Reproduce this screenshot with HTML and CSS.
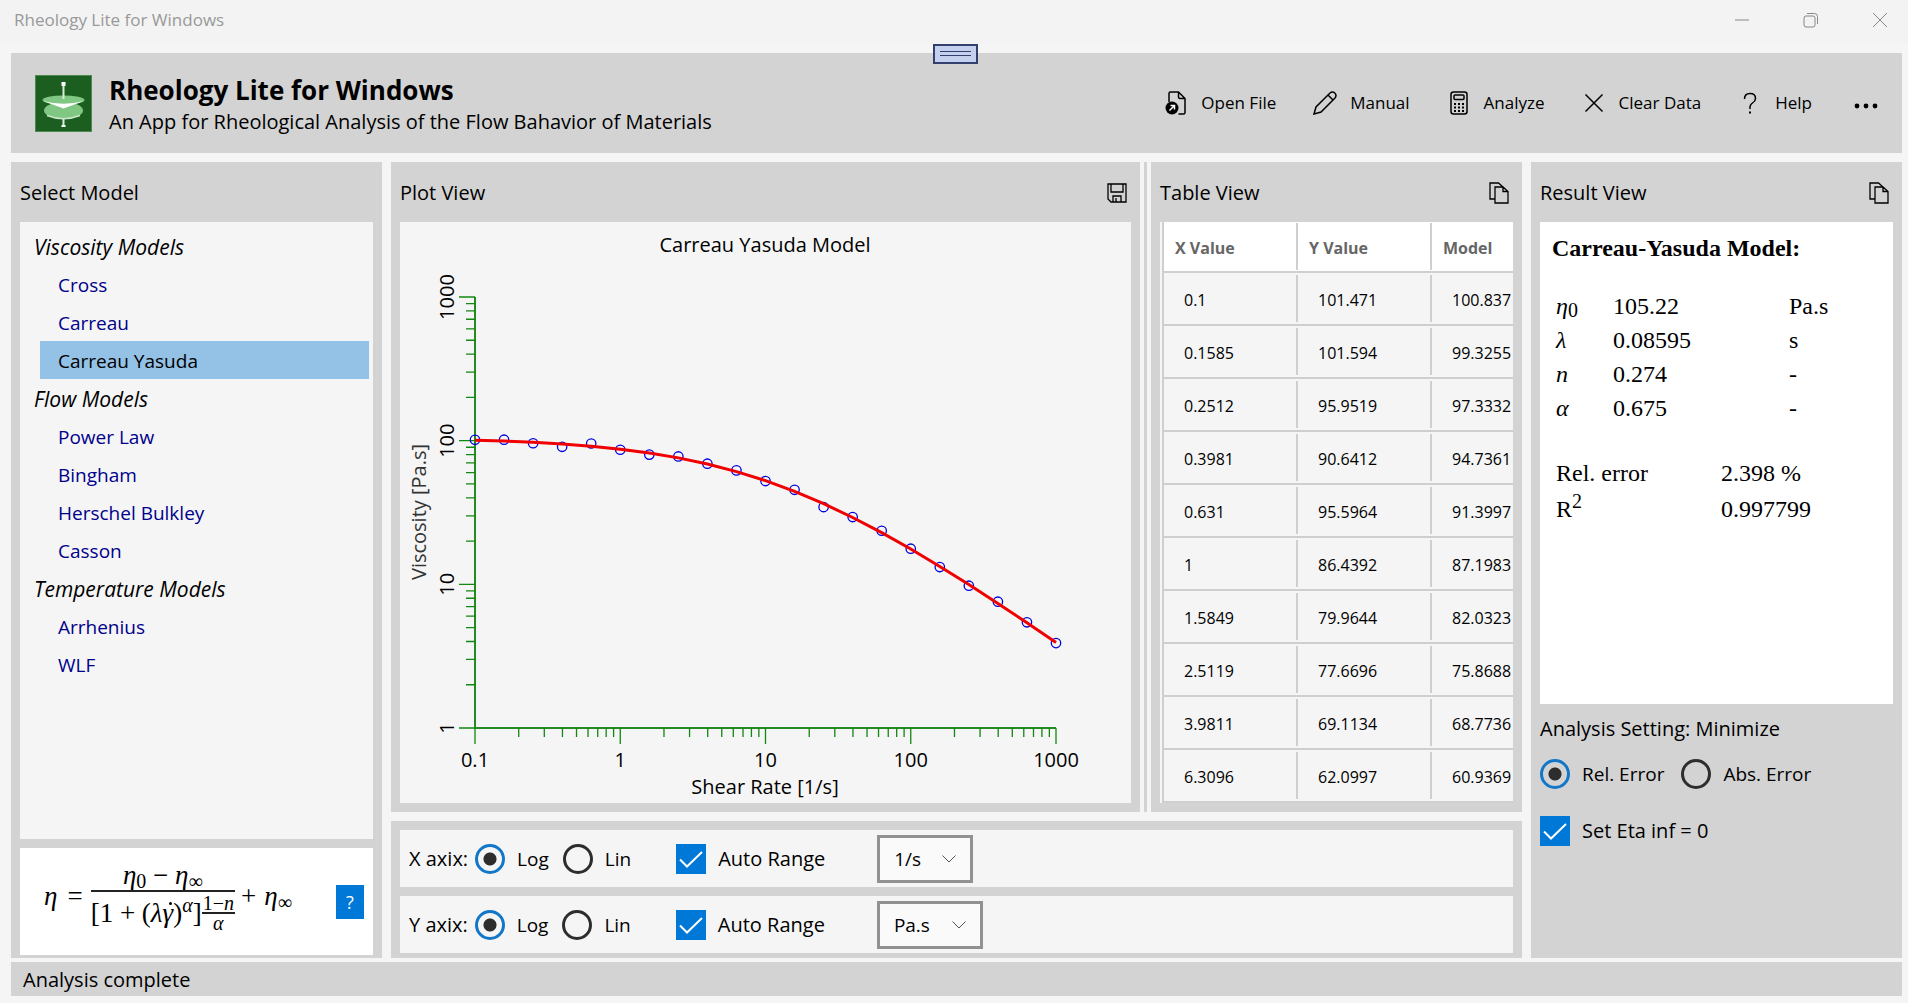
FILE: index.html
```html
<!DOCTYPE html>
<html lang="en">
<head>
  <meta charset="UTF-8">
  <meta name="viewport" content="width=device-width, initial-scale=1.0">
  <title>Rheology Lite for Windows</title>
  <link rel="stylesheet" href="styles.css">
</head>
<body>
  <div class="titlebar">
    <span>Rheology Lite for Windows</span>
    <div class="window-buttons">
      <button type="button" aria-label="Minimize">
        <svg width="16" height="16" viewBox="0 0 16 16"><path d="M1 8h14"/></svg>
      </button>
      <button type="button" aria-label="Restore">
        <svg width="16" height="16" viewBox="0 0 16 16"><rect x="1" y="4" width="11" height="11" rx="2"/><path d="M4 1.5h7.5a3 3 0 0 1 3 3V12"/></svg>
      </button>
      <button type="button" aria-label="Close">
        <svg width="16" height="16" viewBox="0 0 16 16"><path d="M1 1l14 14M15 1L1 15"/></svg>
      </button>
    </div>
  </div>

  <div class="app">
    <header class="header">
      <button type="button" class="drag-handle" aria-label="Toolbar"></button>
      <svg class="logo" width="57" height="57" viewBox="0 0 57 57">
        <rect width="57" height="57" fill="#1b5e20"/>
        <rect x=".5" y=".5" width="56" height="56" fill="none" stroke="#4b8a4f"/>
        <ellipse cx="28.500" cy="35.500" rx="19.500" ry="8.500" fill="#81c784"/>
        <path d="M12 40.500Q28.500 47 45 40.500" fill="none" stroke="#c8e6c9" stroke-width="1.500"/>
        <ellipse cx="28.500" cy="25" rx="21" ry="4.500" fill="#81c784"/>
        <path d="M8 26Q28.500 31.500 49 26L28.500 33.500Z" fill="#fff"/>
        <path d="M28.500 7v17M28.500 44v8" stroke="#d7efd8" stroke-width="2"/>
        <path d="M28.500 7v4M28.500 50v2" stroke="#fff" stroke-width="4"/>
      </svg>
      <div class="app-name">
        <h1>Rheology Lite for Windows</h1>
        <p>An App for Rheological Analysis of the Flow Bahavior of Materials</p>
      </div>
      <div class="toolbar">
        <button type="button">
          <svg width="24" height="24" viewBox="0 0 24 24"><path d="M5 11V2.500Q5 1 6.500 1H14.500L21 7.500V21.500Q21 23 19.500 23H14.500M14.500 1V6Q14.500 7.500 16 7.500H21"/><circle cx="8" cy="17" r="6.500" fill="#000" stroke="none"/><path d="M5.500 19.500L10 15M6.500 14.500H10.500V18.500" stroke="#fff"/></svg>
          Open File
        </button>
        <button type="button">
          <svg width="24" height="24" viewBox="0 0 24 24"><path d="M1 23L3 16L17 2Q19.500 0 22 2.200Q24 4.500 22 7L8 21L1 23ZM15 4L20 9"/></svg>
          Manual
        </button>
        <button type="button">
          <svg width="24" height="24" viewBox="0 0 24 24"><rect x="4" y="1" width="16" height="22" rx="2.500"/><rect x="7" y="4" width="10" height="4.500" rx="1"/><path d="M7 13h2M11 13h2M15 13h2M7 16.500h2M11 16.500h2M15 16.500h2M7 20h2M11 20h2M15 20h2" stroke-width="2"/></svg>
          Analyze
        </button>
        <button type="button">
          <svg width="24" height="24" viewBox="0 0 24 24"><path d="M3.500 3.500L20.500 20.500M20.500 3.500L3.500 20.500"/></svg>
          Clear Data
        </button>
        <button type="button">
          <svg width="24" height="24" viewBox="0 0 24 24"><path d="M6.500 8Q6.500 2.500 12 2.500T17.500 7.500Q17.500 10 14.500 12T12 18"/><path d="M12 20.500v2" stroke-width="2"/></svg>
          Help
        </button>
        <button type="button" class="more" aria-label="More">
          <svg width="24" height="24" viewBox="0 0 24 24"><g fill="#000" stroke="none"><circle cx="3" cy="15" r="2.400"/><circle cx="12" cy="15" r="2.400"/><circle cx="21" cy="15" r="2.400"/></g></svg>
        </button>
      </div>
    </header>

    <main class="main">
      <section class="panel models">
        <div class="panel-head"><h2>Select Model</h2></div>
        <nav class="tree">
          <h3>Viscosity Models</h3>
          <a href="#cross">Cross</a>
          <a href="#carreau">Carreau</a>
          <a href="#carreau-yasuda" class="selected">Carreau Yasuda</a>
          <h3>Flow Models</h3>
          <a href="#power-law">Power Law</a>
          <a href="#bingham">Bingham</a>
          <a href="#herschel-bulkley">Herschel Bulkley</a>
          <a href="#casson">Casson</a>
          <h3>Temperature Models</h3>
          <a href="#arrhenius">Arrhenius</a>
          <a href="#wlf">WLF</a>
        </nav>
        <div class="formula-box">
          <div class="formula">
            <i>η</i> <span class="op">=</span>
            <span class="frac">
              <span class="num"><i>η</i><sub>0</sub> − <i>η</i><sub>∞</sub></span>
              <span class="den">
                <span>[1 + (<i>λ<span class="dot">γ</span></i>)<sup><i>α</i></sup>]</span>
                <span class="frac small"><span class="num">1−<i>n</i></span><span class="den"><i>α</i></span></span>
              </span>
            </span>
            <span class="op plus">+</span> <span><i>η</i><sub>∞</sub></span>
          </div>
          <button type="button" class="help-btn">?</button>
        </div>
      </section>

      <div class="center">
        <section class="panel plot">
          <div class="panel-head">
            <h2>Plot View</h2>
            <button type="button" aria-label="Save plot">
              <svg width="20" height="22" viewBox="0 0 20 22"><path d="M1 2H19V20H4L1 17ZM4 2V10H16V2M6 20V14H14V20M9 16V20"/></svg>
            </button>
          </div>
          <svg class="chart" id="chart" viewBox="0 0 731 581">
            <text x="365" y="30">Carreau Yasuda Model</text>
            <text x="365" y="572">Shear Rate [1/s]</text>
            <text class="y-title" transform="translate(26 290) rotate(-90)">Viscosity [Pa.s]</text>
          </svg>
        </section>
        <div class="splitter"></div>
        <section class="panel data">
          <div class="panel-head">
            <h2>Table View</h2>
            <button type="button" aria-label="Copy table">
              <svg width="20" height="22" viewBox="0 0 20 22"><path d="M6 17H1V1H9.500L14 5M6 5H14L19 9.500V21H6ZM14 5V9.500H19"/></svg>
            </button>
          </div>
          <div class="table-wrap">
            <table class="data-table">
              <thead>
                <tr><th>X Value</th><th>Y Value</th><th>Model</th></tr>
              </thead>
              <tbody>
                <tr><td>0.1</td><td>101.471</td><td>100.837</td></tr>
                <tr><td>0.1585</td><td>101.594</td><td>99.3255</td></tr>
                <tr><td>0.2512</td><td>95.9519</td><td>97.3332</td></tr>
                <tr><td>0.3981</td><td>90.6412</td><td>94.7361</td></tr>
                <tr><td>0.631</td><td>95.5964</td><td>91.3997</td></tr>
                <tr><td>1</td><td>86.4392</td><td>87.1983</td></tr>
                <tr><td>1.5849</td><td>79.9644</td><td>82.0323</td></tr>
                <tr><td>2.5119</td><td>77.6696</td><td>75.8688</td></tr>
                <tr><td>3.9811</td><td>69.1134</td><td>68.7736</td></tr>
                <tr><td>6.3096</td><td>62.0997</td><td>60.9369</td></tr>
              </tbody>
            </table>
          </div>
        </section>

        <section class="panel axes">
          <div class="axis-row">
            <span>X axix:</span>
            <label><input type="radio" name="x-scale" checked> Log</label>
            <label><input type="radio" name="x-scale"> Lin</label>
            <label class="check auto-range"><input type="checkbox" checked> Auto Range</label>
            <select aria-label="X unit"><option>1/s</option></select>
          </div>
          <div class="axis-row">
            <span>Y axix:</span>
            <label><input type="radio" name="y-scale" checked> Log</label>
            <label><input type="radio" name="y-scale"> Lin</label>
            <label class="check auto-range"><input type="checkbox" checked> Auto Range</label>
            <select aria-label="Y unit"><option>Pa.s</option></select>
          </div>
        </section>
      </div>

      <section class="panel result">
        <div class="panel-head">
          <h2>Result View</h2>
          <button type="button" aria-label="Copy result">
            <svg width="20" height="22" viewBox="0 0 20 22"><path d="M6 17H1V1H9.500L14 5M6 5H14L19 9.500V21H6ZM14 5V9.500H19"/></svg>
          </button>
        </div>
        <div class="report">
          <h3>Carreau-Yasuda Model:</h3>
          <table class="params">
            <tr><td><i>η</i><sub>0</sub></td><td>105.22</td><td>Pa.s</td></tr>
            <tr><td><i>λ</i></td><td>0.08595</td><td>s</td></tr>
            <tr><td><i>n</i></td><td>0.274</td><td>-</td></tr>
            <tr><td><i>α</i></td><td>0.675</td><td>-</td></tr>
          </table>
          <table class="errors">
            <tr><td>Rel. error</td><td>2.398 %</td></tr>
            <tr><td>R<sup>2</sup></td><td>0.997799</td></tr>
          </table>
        </div>
        <div class="settings">
          <p>Analysis Setting: Minimize</p>
          <div class="error-type">
            <label><input type="radio" name="error" checked> Rel. Error</label>
            <label><input type="radio" name="error"> Abs. Error</label>
          </div>
          <label class="check"><input type="checkbox" checked> Set Eta inf = 0</label>
        </div>
      </section>
    </main>

    <footer class="status">Analysis complete</footer>
  </div>

  <script src="plot.js"></script>
</body>
</html>
```
FILE: styles.css
```css
* {
  box-sizing: border-box;
  margin: 0;
  padding: 0;
}

body {
  display: flex;
  flex-direction: column;
  min-height: 100vh;
  background: #f5f5f5;
  color: #000;
  font-family: 'Segoe UI', 'Open Sans', 'Noto Sans', sans-serif;
  font-size: 20px;
  line-height: 26px;
}

button {
  border: none;
  background: none;
  color: inherit;
  font: inherit;
}

svg {
  display: block;
}

button svg {
  fill: none;
  stroke: #000;
  stroke-width: 1.5;
}

h1, h2, h3 {
  font-weight: normal;
  font-size: inherit;
}

/* Title bar */
.titlebar {
  display: flex;
  justify-content: space-between;
  align-items: center;
  height: 44px;
  padding: 0 20px 4px 14px;
  background: #f3f3f3;
  color: #999;
  font-size: 17px;
}

.window-buttons {
  display: flex;
  gap: 53px;
}

.window-buttons svg {
  stroke: #888;
  stroke-width: 1;
}

.app {
  flex: 1;
  display: flex;
  flex-direction: column;
  padding: 9px 6px 7px 11px;
}

/* Header */
.header {
  position: relative;
  display: flex;
  align-items: center;
  height: 100px;
  margin-bottom: 9px;
  padding: 0 24px;
  background: #d3d3d3;
}

.drag-handle {
  position: absolute;
  top: -9px;
  left: 50%;
  width: 45px;
  height: 20px;
  margin-left: -24px;
  border: 2px solid #33406e;
  background: linear-gradient(#33406e, #33406e) center 5px / 31px 1px no-repeat,
    linear-gradient(#33406e, #33406e) center 9px / 31px 1px no-repeat,
    #c5d0ee;
}

.app-name {
  flex: 1;
  margin-left: 17px;
  padding-top: 4px;
}

.app-name h1 {
  font-size: 26px;
  font-weight: bold;
  line-height: 34px;
}

.app-name p {
  line-height: 30px;
}

.toolbar {
  display: flex;
  gap: 37px;
  font-size: 17px;
}

.toolbar button {
  display: flex;
  align-items: center;
  gap: 13px;
  white-space: nowrap;
}

.toolbar .more {
  margin-left: 5px;
}

/* Panels */
.main {
  flex: 1;
  display: grid;
  grid-template-columns: 371px 1fr 371px;
  gap: 9px;
}

.panel {
  display: flex;
  flex-direction: column;
  padding: 0 9px 9px;
  background: #d3d3d3;
}

.panel-head {
  display: flex;
  justify-content: space-between;
  align-items: center;
  height: 60px;
  padding: 2px 4px 0 0;
}

.panel-head button svg {
  stroke-width: 1.3;
}

/* Model tree */
.models {
  padding-bottom: 3px;
}

.tree {
  flex: 1;
  padding: 5px 4px 0 14px;
  background: #f5f5f5;
  font-size: 19px;
}

.tree h3,
.tree a {
  padding-top: 2px;
  line-height: 36px;
}

.tree h3 {
  font-size: 21px;
  font-style: italic;
}

.tree a {
  display: block;
  margin-left: 6px;
  padding-left: 18px;
  color: #00008b;
  text-decoration: none;
}

.tree a.selected {
  background: #93c2e6;
  color: #000;
}

.formula-box {
  display: flex;
  justify-content: space-between;
  align-items: center;
  height: 107px;
  margin-top: 9px;
  padding: 0 9px 0 24px;
  background: #fff;
}

.formula {
  display: flex;
  align-items: center;
  padding-bottom: 12px;
  font: 27px/30px 'Liberation Serif', serif;
  white-space: nowrap;
}

.formula sub,
.formula sup {
  font-size: 20px;
  line-height: 1px;
}

.formula sub {
  vertical-align: -4px;
}

.formula .op {
  margin: 0 8px 0 10px;
}

.formula .plus {
  margin: 0 8px 0 6px;
}

/* time derivative mark over gamma */
.dot {
  position: relative;
}

.dot::before {
  content: '';
  position: absolute;
  top: 4px;
  left: 6px;
  width: 3px;
  height: 3px;
  border-radius: 50%;
  background: #000;
}

.frac {
  display: inline-flex;
  flex-direction: column;
  align-items: center;
}

.frac .num {
  align-self: stretch;
  border-bottom: 2px solid #222;
  text-align: center;
}

.frac .den {
  display: flex;
  align-items: center;
  padding-top: 2px;
}

.frac.small {
  font-size: 20px;
  line-height: 18px;
}

.frac.small .num {
  padding: 0 1px;
}

.frac.small .den {
  padding: 0;
}

.help-btn {
  width: 28px;
  height: 34px;
  background: #0078d7;
  color: #fff;
  font-size: 18px;
}

/* Plot, table and axis settings */
.center {
  display: grid;
  grid-template-columns: 1fr 3px 371px;
  grid-template-rows: 1fr auto;
  gap: 9px 4px;
  min-width: 0;
}

.splitter {
  background: #d3d3d3;
}

.chart {
  flex: 1;
  width: 100%;
  min-height: 0;
  background: #f5f5f5;
}

.chart text {
  font-size: 20px;
  text-anchor: middle;
}

.chart .y-title {
  fill: #333;
}

.chart .axis {
  fill: none;
  stroke: #228b22;
  stroke-width: 2;
}

.chart .ticks {
  stroke: #118811;
  stroke-width: 1.3;
}

.chart .fit {
  fill: none;
  stroke: #f00000;
  stroke-width: 3;
}

.chart circle {
  fill: none;
  stroke: #0000e0;
  stroke-width: 1.3;
}

.table-wrap {
  flex: 1;
  padding-left: 2px;
  overflow: hidden;
  background: #f5f5f5;
}

.data-table {
  width: 404px;
  table-layout: fixed;
  border-spacing: 0;
  border-left: 2px solid #cfcfcf;
  font-size: 16px;
}

.data-table th,
.data-table td {
  height: 53px;
  padding-top: 2px;
  border-bottom: 2px solid #cfcfcf;
  background: linear-gradient(#cfcfcf, #cfcfcf) right center / 2px 47px no-repeat;
  text-align: left;
}

.data-table th {
  height: 51px;
  padding-left: 11px;
  background-color: #fff;
  color: #666;
  font-weight: 700;
}

.data-table td {
  padding-left: 20px;
}

.axes {
  grid-column: 1 / -1;
  gap: 9px;
  padding: 9px 9px 5px;
}

.axis-row {
  display: flex;
  align-items: center;
  height: 57px;
  padding-left: 9px;
  background: #f5f5f5;
}

.axis-row > span {
  margin-right: 7px;
}

.axis-row label {
  margin-right: 14px;
}

.axis-row .auto-range {
  margin: 0 52px 0 31px;
}

label {
  display: inline-flex;
  align-items: center;
  gap: 12px;
  font-size: 19px;
}

label.check {
  font-size: 20px;
}

input {
  appearance: none;
  display: grid;
  place-items: center;
  width: 30px;
  height: 30px;
}

input[type="radio"] {
  border: 3px solid #2d2d2d;
  border-radius: 50%;
}

input[type="radio"]:checked {
  border-color: #1277c8;
  background: radial-gradient(circle, #2d2d2d 6px, transparent 7px);
}

input[type="checkbox"]:checked {
  background: #0078d7 url("data:image/svg+xml,%3Csvg xmlns='http://www.w3.org/2000/svg' viewBox='0 0 30 30'%3E%3Cpath d='M4 15.500l7 7L26 8' fill='none' stroke='white' stroke-width='2'/%3E%3C/svg%3E");
}

select {
  appearance: none;
  height: 48px;
  padding: 0 49px 0 14px;
  border: 3px solid #919191;
  background: #fafafa url("data:image/svg+xml,%3Csvg xmlns='http://www.w3.org/2000/svg' width='14' height='8'%3E%3Cpath d='M.5.5L7 7L13.500.5' fill='none' stroke='%23555'/%3E%3C/svg%3E") right 14px center no-repeat;
  color: #000;
  font: inherit;
  font-size: 19px;
}

/* Result */
.report {
  flex: 1;
  padding: 11px 12px;
  background: #fff;
  font: 24px/30px 'Liberation Serif', serif;
}

.report h3 {
  margin-bottom: 26px;
  font-weight: bold;
}

.report table {
  margin-left: 4px;
  border-spacing: 0;
}

.report td {
  height: 34px;
}

.report sub,
.report sup {
  line-height: 1px;
}

.report sub {
  vertical-align: -3px;
}

.params td:nth-child(1) {
  width: 57px;
}

.params td:nth-child(2) {
  width: 176px;
}

.errors {
  margin-top: 30px;
}

.errors td {
  height: 36px;
}

.errors td:nth-child(1) {
  width: 165px;
}

.settings {
  display: flex;
  flex-direction: column;
  align-items: flex-start;
  height: 245px;
  padding-top: 12px;
}

.error-type {
  display: flex;
  gap: 17px;
  margin: 17px 0 27px;
}

/* Status bar */
.status {
  height: 34px;
  margin-top: 4px;
  padding: 5px 12px;
  background: #d3d3d3;
}
```
FILE: plot.js
```js
const SVG_NS = 'http://www.w3.org/2000/svg';
const chart = document.getElementById('chart');

// plot area in viewBox units, log-log axes
const left = 75, right = 656, top_ = 75, bottom = 506;
const xDecade = (right - left) / 4;
const yDecade = (bottom - top_) / 3;

const px = x => left + (Math.log10(x) + 1) * xDecade;
const py = y => bottom - Math.log10(y) * yDecade;

function add(name, attrs, text) {
  const el = document.createElementNS(SVG_NS, name);
  for (const key in attrs) el.setAttribute(key, attrs[key]);
  if (text) el.textContent = text;
  chart.appendChild(el);
}

// Axes
add('path', { class: 'axis', d: `M${left} ${top_}V${bottom}H${right}` });

// Ticks
let ticks = '';
for (let d = -1; d <= 3; d++) {
  for (let m = 1; m < 10; m++) {
    const v = m * Math.pow(10, d);
    const len = m === 1 ? 16 : 9;
    if (v <= 1000) ticks += `M${px(v)} ${bottom}v${len}`;
    if (d >= 0 && v <= 1000) ticks += `M${left} ${py(v)}h${-len}`;
  }
}
add('path', { class: 'ticks', d: ticks });

['0.1', '1', '10', '100', '1000'].forEach(t => {
  add('text', { x: px(+t), y: 545 }, t);
});
['1', '10', '100', '1000'].forEach(t => {
  add('text', { transform: `translate(54 ${py(+t)}) rotate(-90)` }, t);
});

// Measured points, five per decade
const eta = [101.471, 101.594, 95.9519, 90.6412, 95.5964, 86.4392, 79.9644,
  77.6696, 69.1134, 62.0997, 52.35, 45.5, 34.5, 29.4, 23.6, 17.7, 13.19,
  9.78, 7.57, 5.44, 3.9];
eta.forEach((y, i) => {
  add('circle', { cx: px(Math.pow(10, i / 5 - 1)), cy: py(y), r: 4.7 });
});

// Carreau-Yasuda fit
function model(rate) {
  return 105.22 / Math.pow(1 + Math.pow(0.08595 * rate, 0.675), (1 - 0.274) / 0.675);
}
const fit = eta.map((_, i) => {
  const x = Math.pow(10, i / 5 - 1);
  return `${px(x)},${py(model(x))}`;
});
add('polyline', { class: 'fit', points: fit.join(' ') });
```
